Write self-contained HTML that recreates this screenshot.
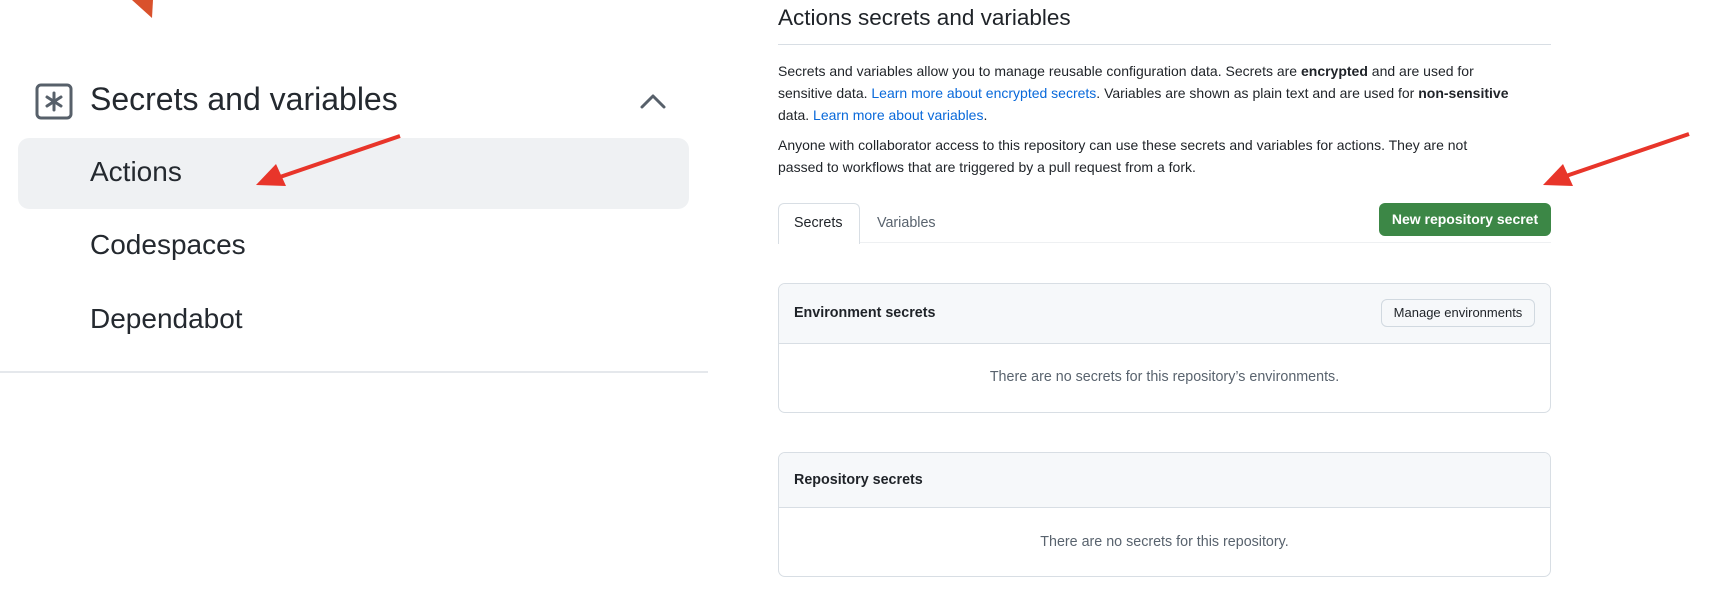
<!DOCTYPE html>
<html><head><meta charset="utf-8"><style>
*{margin:0;padding:0;box-sizing:border-box}
body{width:1722px;height:616px;background:#fff;position:relative;overflow:hidden;font-family:"Liberation Sans",sans-serif;color:#1f2328}
.a{position:absolute;white-space:nowrap}
.nav{font-size:28px;color:#24292f}
p{position:absolute;left:778px;white-space:nowrap;font-size:14px;line-height:22px;color:#1f2328}
a{color:#0969da;text-decoration:none}
.box{position:absolute;left:778px;width:773px;border:1px solid #d8dee4;border-radius:7px;overflow:hidden}
.hd{background:#f6f8fa;border-bottom:1px solid #d8dee4;position:relative}
.hd span{position:absolute;left:15px;font-weight:bold;font-size:14.3px}
.bd{position:relative;text-align:center;color:#59636e;font-size:14.3px}
</style></head><body>
<svg class="a" style="left:0;top:0" width="1722" height="616">
<polygon points="132,0 153,0 152,18" fill="#d9512c"/>
<line x1="1689" y1="134" x2="1566" y2="176" stroke="#e8352a" stroke-width="4"/>
<polygon points="1543,185 1563,164 1573,186" fill="#e8352a"/>
<rect x="37" y="85" width="34" height="33" rx="4" fill="none" stroke="#57606a" stroke-width="3"/>
<g stroke="#57606a" stroke-width="3" stroke-linecap="round"><line x1="54" y1="93" x2="54" y2="110"/><line x1="47" y1="97" x2="61" y2="106"/><line x1="61" y1="97" x2="47" y2="106"/></g>
<polyline points="642,107 653,96 664,107" fill="none" stroke="#57606a" stroke-width="3" stroke-linecap="round" stroke-linejoin="round"/>
</svg>
<div class="a nav" style="left:90px;top:81px;font-size:32px">Secrets and variables</div>
<div class="a" style="left:18px;top:138px;width:671px;height:71px;background:#eff1f3;border-radius:11px"></div>
<div class="a nav" style="left:90px;top:156px">Actions</div>
<div class="a nav" style="left:90px;top:229px">Codespaces</div>
<div class="a nav" style="left:90px;top:303px">Dependabot</div>
<svg class="a" style="left:0;top:0" width="420" height="200"><line x1="400" y1="136" x2="280" y2="177" stroke="#e8352a" stroke-width="4"/><polygon points="256,185 276,164 286,186" fill="#e8352a"/></svg>
<div class="a" style="left:0;top:371px;width:708px;height:2px;background:#e5e8ec"></div>

<div class="a" style="left:778px;top:5px;font-size:22.5px">Actions secrets and variables</div>
<div class="a" style="left:778px;top:44px;width:773px;height:1px;background:#d8dee4"></div>
<p style="top:60px">Secrets and variables allow you to manage reusable configuration data. Secrets are <b>encrypted</b> and are used for<br>sensitive data. <a>Learn more about encrypted secrets</a>. Variables are shown as plain text and are used for <b>non-sensitive</b><br>data. <a>Learn more about variables</a>.</p>
<p style="top:134px">Anyone with collaborator access to this repository can use these secrets and variables for actions. They are not<br>passed to workflows that are triggered by a pull request from a fork.</p>
<div class="a" style="left:778px;top:242px;width:773px;height:1px;background:#eef0f2"></div>
<div class="a" style="left:778px;top:203px;width:82px;height:41px;border:1px solid #d8dee4;border-bottom:none;border-radius:6px 6px 0 0;background:#fff"></div>
<div class="a" style="left:794px;top:215px;font-size:14.3px">Secrets</div>
<div class="a" style="left:877px;top:215px;font-size:14.3px;color:#59636e">Variables</div>
<div class="a" style="left:1379px;top:203px;width:172px;height:33px;background:#3c8746;border-radius:6px;color:#fff;font-weight:bold;font-size:14px;text-align:center;line-height:33px">New repository secret</div>

<div class="box" style="top:283px;height:130px">
<div class="hd" style="height:60px"><span style="top:21px">Environment secrets</span>
<div class="a" style="left:602px;top:15px;width:154px;height:28px;border:1px solid #d1d9e0;border-radius:6px;background:#f6f8fa;font-size:13px;text-align:center;line-height:26px">Manage environments</div></div>
<div class="bd" style="padding-top:25px">There are no secrets for this repository’s environments.</div>
</div>
<div class="box" style="top:452px;height:125px">
<div class="hd" style="height:55px"><span style="top:19px">Repository secrets</span></div>
<div class="bd" style="padding-top:26px">There are no secrets for this repository.</div>
</div>
</body></html>
